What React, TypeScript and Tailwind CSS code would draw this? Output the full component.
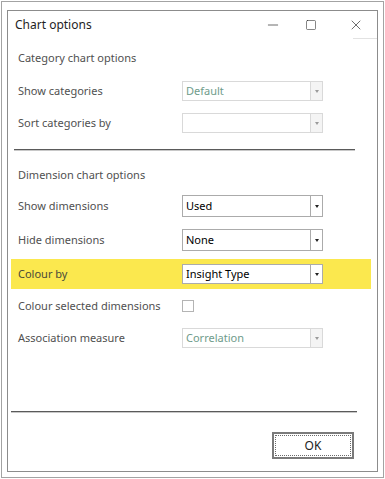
import { X, Minus, Square } from 'lucide-react';

const FONT = "font-['Segoe_UI','Noto_Sans','Open_Sans',sans-serif]";

type DropProps = { value?: string; disabled?: boolean; tall?: boolean };

const Dropdown = ({ value = '', disabled = false, tall = false }: DropProps) => (
  <div
    className={`flex w-[141px] ${tall ? 'h-[22px]' : 'h-[20px]'} border bg-white ${
      disabled ? 'border-[#d9d9d9]' : 'border-[#ababab]'
    }`}
  >
    <div
      className={`flex-1 flex items-center pl-[3px] text-[11px] ${
        disabled ? 'text-[#6f9c8b]' : 'text-black'
      }`}
    >
      {value}
    </div>
    <div
      className={`w-[12px] flex items-center justify-center border-l ${
        disabled ? 'border-[#d9d9d9] bg-[#f4f4f4]' : 'border-[#ababab] bg-white'
      }`}
    >
      <div
        className={`w-0 h-0 border-l-[2.5px] border-r-[2.5px] border-t-[3px] border-l-transparent border-r-transparent ${
          disabled ? 'border-t-[#9a9a9a]' : 'border-t-[#222]'
        }`}
      />
    </div>
  </div>
);

const Row = ({ label, children, className = '' }: { label: string; children: React.ReactNode; className?: string }) => (
  <div className={`flex items-center pl-[10px] ${className}`}>
    <span className="w-[164px] text-[11px] text-[#505050]">{label}</span>
    {children}
  </div>
);

export default function App() {
  return (
    <div className={`w-[385px] h-[479px] bg-white p-px ${FONT}`}>
      <div className="h-full border border-[#a3a3a3] pt-[8px] px-[5px] pb-[5px]">
        <div className="h-full border border-[#8c8c8c] flex flex-col">
          {/* title bar */}
          <div className="h-[27px] flex items-center pl-[7px]">
            <span className="text-[12px] text-[#1e1e1e]">Chart options</span>
            <div className="ml-auto flex items-center text-[#222]">
              <div className="w-[28px] flex justify-center">
                <Minus size={16} strokeWidth={1} />
              </div>
              <div className="w-[48px] flex justify-center">
                <Square size={12} strokeWidth={1.1} />
              </div>
              <div className="w-[42px] flex justify-center">
                <X size={16} strokeWidth={1} />
              </div>
            </div>
          </div>
          <div className="flex justify-end">
            <div className="w-[24px] h-px bg-[#e2e2e2]" />
          </div>

          {/* category section */}
          <div className="mt-[9px] h-[20px] flex items-center pl-[10px] text-[11px] text-[#505050]">
            Category chart options
          </div>
          <Row label="Show categories" className="mt-[13px] h-[20px]">
            <Dropdown value="Default" disabled />
          </Row>
          <Row label="Sort categories by" className="mt-[12px] h-[20px]">
            <Dropdown disabled />
          </Row>
          <div className="mt-[16px] ml-[6px] w-[341px] h-[2px] flex flex-col">
            <div className="h-px bg-[#5a5a5a]" />
            <div className="h-px bg-[#c8c8c8]" />
          </div>

          {/* dimension section */}
          <div className="mt-[14px] h-[20px] flex items-center pl-[10px] text-[11px] text-[#505050]">
            Dimension chart options
          </div>
          <Row label="Show dimensions" className="mt-[10px] h-[22px]">
            <Dropdown value="Used" tall />
          </Row>
          <Row label="Hide dimensions" className="mt-[12px] h-[22px]">
            <Dropdown value="None" tall />
          </Row>
          <div className="mt-[8px] ml-[3px] w-[360px] h-[30px] bg-[#fbe84e] flex items-center pl-[7px]">
            <span className="w-[164px] text-[11px] text-[#4a4a3a]">Colour by</span>
            <Dropdown value="Insight Type" />
          </div>
          <Row label="Colour selected dimensions" className="mt-[7px] h-[20px]">
            <div className="w-[12px] h-[12px] border border-[#b4b4b4] bg-white" />
          </Row>
          <Row label="Association measure" className="mt-[12px] h-[20px]">
            <Dropdown value="Correlation" disabled />
          </Row>

          <div className="mt-[63px] ml-[3px] w-[346px] h-[2px] flex flex-col">
            <div className="h-px bg-[#5a5a5a]" />
            <div className="h-px bg-[#c8c8c8]" />
          </div>

          <div className="mt-[19px] flex pl-[264px]">
            <button
              type="button"
              className="w-[82px] h-[27px] border-2 border-[#7a7a7a] bg-white p-px"
            >
              <div className="h-full border border-dotted border-[#6a6a6a] flex items-center justify-center text-[12px] text-[#222]">
                OK
              </div>
            </button>
          </div>
        </div>
      </div>
    </div>
  );
}
